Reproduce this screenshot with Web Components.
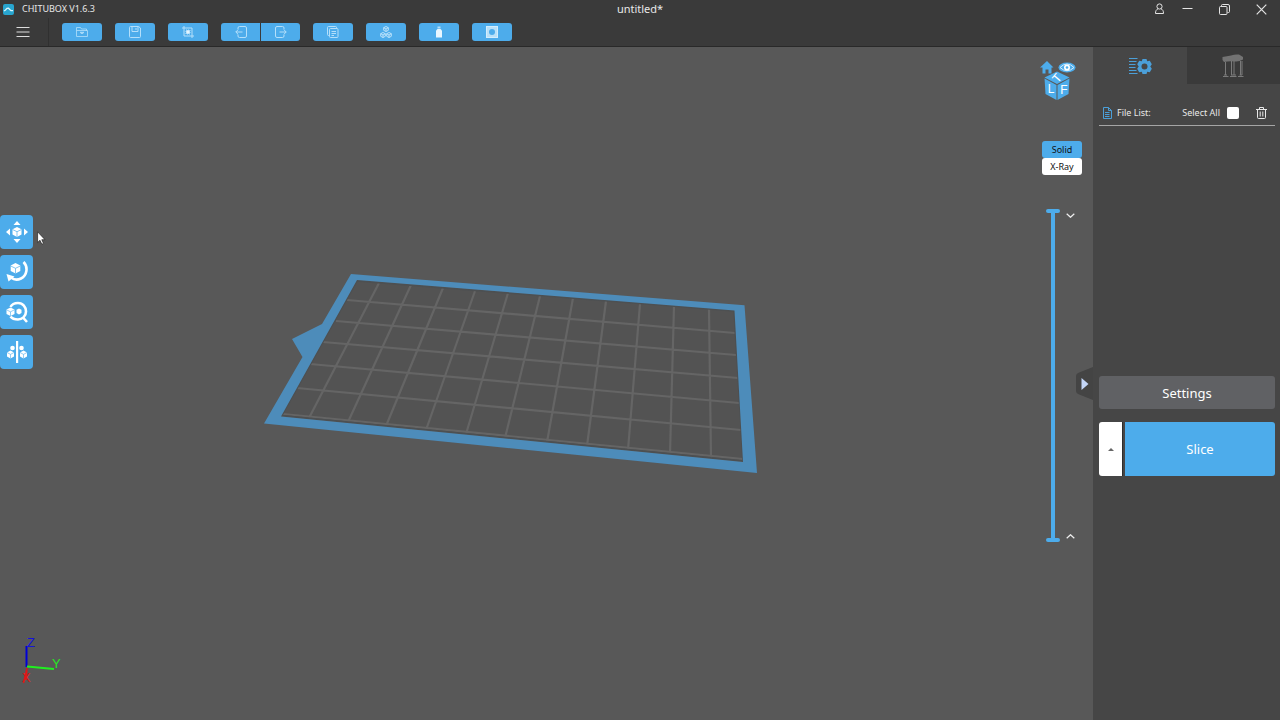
<!DOCTYPE html>
<html lang="en">
<head>
<meta charset="utf-8">
<title>CHITUBOX V1.6.3</title>
<style>
  html, body { height: 100%; margin: 0; }
  body {
    --bar: #3a3a3a; --panel: #464646; --stage: #585858; --blue: #4daceb; --plate: #4d8cba;
    background: var(--stage); color: #e8e8e8; font: 9px/12px "Noto Sans", "Open Sans", sans-serif;
  }
</style>
</head>
<body>
<chitu-app></chitu-app>

<template id="t-app">
  <style>
    :host { display: flex; flex-direction: column; min-height: 100vh; }
    main { flex: 1; display: flex; }
    print-stage { flex: 1; }
  </style>
  <title-bar app="CHITUBOX V1.6.3" file="untitled*"></title-bar>
  <tool-bar></tool-bar>
  <main><print-stage></print-stage><side-panel></side-panel></main>
</template>

<template id="t-title">
  <style>
    :host { display: grid; grid-template-columns: 1fr auto 1fr; align-items: center; height: 18px; background: var(--bar); }
    .app { display: flex; align-items: center; gap: 8px; padding-left: 3px; }
    .file { font-size: 11px; line-height: 18px; }
    .win { display: flex; justify-content: flex-end; }
    button { width: 37px; height: 18px; padding: 0; border: 0; background: none; color: inherit; display: grid; place-items: center; }
    button.user { width: 19px; }
    svg { display: block; fill: none; stroke: #e4e4e4; }
  </style>
  <div class="app">
    <svg width="11" height="11" viewBox="0 0 11 11" stroke="none"><rect width="11" height="11" rx="2" fill="#28a5cf" stroke="none"/><path d="M1 7 2.500 6 4 4.300 5.500 4.200 7 5.800 8 6.600 10 6.600" stroke="#d9f6ff" stroke-width="1.300"/></svg>
    <span id="app"></span>
  </div>
  <div class="file" id="file"></div>
  <div class="win">
    <button class="user" aria-label="Account"><svg width="11" height="12" viewBox="0 0 11 12"><circle cx="5.500" cy="3.500" r="2.600"/><path d="M4 5.800C2.200 6.600 1.500 8 1.500 10.500H9.500C9.500 8 8.800 6.600 7 5.800"/></svg></button>
    <button aria-label="Minimize"><svg width="11" height="11" viewBox="0 0 11 11"><path d="M.5 4.500H10.500"/></svg></button>
    <button aria-label="Restore"><svg width="11" height="11" viewBox="0 0 11 11"><rect x=".5" y="2.500" width="7.500" height="8" rx="1"/><path d="M2.500 2V1.500Q2.500.5 3.500.5H9Q10.500.5 10.500 2V7.500Q10.500 8.500 9.500 8.500H8.500"/></svg></button>
    <button aria-label="Close"><svg width="11" height="11" viewBox="0 0 11 11"><path d="M.7.7 10.300 10.300M10.300.7.7 10.300" stroke-width="1.200"/></svg></button>
  </div>
</template>

<template id="t-bar">
  <style>
    :host { display: flex; align-items: center; gap: 13px; height: 28px; background: var(--bar); border-bottom: 1px solid #292929; }
    .menu { box-sizing: border-box; width: 49px; height: 28px; padding: 0 2px 0 0; border: 0; border-right: 1px solid #303030; background: none; display: grid; place-items: center; }
    .pair { display: flex; gap: 1px; }
    svg { display: block; fill: none; stroke: #b4dffa; }
  </style>
  <button class="menu" aria-label="Menu"><svg width="14" height="12" viewBox="0 0 14 12" style="stroke:#ddd"><path d="M.5 1.500H13.500M.5 6H13.500M.5 10.500H13.500"/></svg></button>
  <tool-button label="Open"><svg width="12" height="12" viewBox="0 0 12 12"><path d="M.5 10.500V1.500H4.500L5.500 3H10.500V5M.5 10.500H11.500V4.500H.5M4 6.500H8M5 5.500V7.500H7V5.500" stroke-width=".8"/></svg></tool-button>
  <tool-button label="Save"><svg width="12" height="12" viewBox="0 0 12 12"><path d="M1.500.5H9.500L11.500 2V10.500Q11.500 11.500 10.500 11.500H1.500Q.5 11.500.5 10.500V1.500Q.5.5 1.500.5ZM3 .5V5.500H9V.5M7 2V4"/></svg></tool-button>
  <tool-button label="Crop"><svg width="12" height="12" viewBox="0 0 12 12"><path d="M2 0V10H12M0 2H10V12"/><path d="M4 4H8V8H4Z" fill="#9bd2f5" stroke-dasharray="1 1"/><circle cx="6" cy="6" r="1.700" fill="#e4f5ff" stroke="none"/></svg></tool-button>
  <div class="pair">
    <tool-button label="Undo" side="start"><svg width="12" height="12" viewBox="0 0 12 12"><path d="M3 3.500V2Q3 .5 4.500.5H10Q11.500.5 11.500 2V10Q11.500 11.500 10 11.500H4.500Q3 11.500 3 10V8.500M7.500 6H.8M3 3.800.8 6 3 8.200"/></svg></tool-button>
    <tool-button label="Redo" side="end"><svg width="12" height="12" viewBox="0 0 12 12"><path d="M9 3.500V2Q9 .5 7.500.5H2Q.5.5.5 2V10Q.5 11.500 2 11.500H7.500Q9 11.500 9 10V8.500M4.500 6H11.200M9 3.800 11.200 6 9 8.200"/></svg></tool-button>
  </div>
  <tool-button label="Copy"><svg width="12" height="12" viewBox="0 0 12 12"><path d="M2.500 9.500H1.500Q.5 9.500.5 8.500V1.500Q.5.5 1.500.5H8.500Q9.500.5 9.500 1.500V2.500"/><rect x="2.500" y="2.500" width="8.500" height="9" rx="1"/><path d="M4.500 5.500H9M4.500 7.500H9M4.500 9.500H7"/></svg></tool-button>
  <tool-button label="Auto layout"><svg width="12" height="12" viewBox="0 0 12 12" style="stroke:#d4effe"><path d="M6 .5 8.300 1.700V4.300L6 5.500 3.700 4.300V1.700ZM3.700 1.700 6 3 8.300 1.700M6 3V5.500M3 6.500 5.300 7.700V10.300L3 11.500.7 10.300V7.700ZM.7 7.700 3 9 5.300 7.700M3 9V11.500M9 6.500 11.300 7.700V10.300L9 11.500 6.700 10.300V7.700ZM6.700 7.700 9 9 11.300 7.700M9 9V11.500" stroke-width=".8"/></svg></tool-button>
  <tool-button label="Resin"><svg width="12" height="12" viewBox="0 0 12 12"><path d="M4.500.5H7.500V2.500H4.500Z" fill="#b5dff8" stroke="none"/><path d="M4.500 3H7.500L9 4.500V11.500H3V4.500Z" fill="#e8f6ff" stroke="none"/></svg></tool-button>
  <tool-button label="Hollow"><svg width="12" height="12" viewBox="0 0 12 12"><rect x=".5" y=".5" width="11" height="11" fill="#b9e0f8" stroke="#d2edfd"/><circle cx="6" cy="6" r="3" fill="#4daceb" stroke="none"/></svg></tool-button>
</template>

<template id="t-toolbtn">
  <style>
    :host { display: block; }
    button { display: grid; place-items: center; width: 40px; height: 18px; padding: 0; border: 0; border-radius: 3px; background: var(--blue); }
    :host([side]) button { width: 39px; }
    :host([side=start]) button { border-radius: 3px 0 0 3px; }
    :host([side=end]) button { border-radius: 0 3px 3px 0; }
    :host([large]) button { width: 33px; height: 34px; border-radius: 4px; }
  </style>
  <button><slot></slot></button>
</template>

<template id="t-stage">
  <style>
    :host { display: grid; position: relative; background: var(--stage); min-width: 0; }
    build-plate, .overlay { grid-area: 1 / 1; }
    .overlay { display: flex; justify-content: space-between; align-items: flex-start; z-index: 1; }
    .tools { display: flex; flex-direction: column; gap: 6px; padding-top: 168px; }
    .tools svg { display: block; fill: #fff; stroke: none; }
    .right { display: flex; flex-direction: column; width: 54px; padding-top: 12px; }
    .toggle { position: absolute; z-index: 2; right: 0; top: 0; bottom: 0; margin: auto 0; width: 17px; height: 33px; padding: 0; border: 0; background: none; }
    .toggle svg, .cursor { display: block; }
    .cursor { position: absolute; z-index: 3; left: 37px; top: 184px; }
  </style>
  <build-plate></build-plate>
  <div class="overlay">
    <div class="tools">
      <tool-button large label="Move"><svg width="22" height="22" viewBox="0 0 22 22"><path d="M11 0 14.500 4H7.500ZM11 22 14.500 18H7.500ZM0 11 4 7.500V14.500ZM22 11 18 7.500V14.500Z"/><path d="M11 6 15.500 8.200V13.500L11 16 6.500 13.500V8.200Z"/><path d="M6.500 8.500 11 10.700 15.500 8.500M11 10.700V16" fill="none" stroke="#4daceb" stroke-width=".7"/></svg></tool-button>
      <tool-button large label="Rotate"><svg width="22" height="22" viewBox="0 0 22 22"><path d="M9.500 2 14.300 4.500V10L9.500 12.500 4.700 10V4.500Z"/><path d="M4.700 5 9.500 7.300 14.300 5M9.500 7.300V12.500" fill="none" stroke="#4daceb" stroke-width=".7"/><path d="M17.500 1C22.500 6 21 14.500 15 17.500 12 19 8 19 5 16.500" fill="none" stroke="#fff" stroke-width="2.600"/><path d="M.5 13 8.500 15.500 2.500 20.500Z"/></svg></tool-button>
      <tool-button large label="Scale"><svg width="22" height="22" viewBox="0 0 22 22"><path d="M4.500 6C6 3 9 2 12 2 17 2 20 6 20 10.500 20 15.500 16 18.500 12 18.500 9 18.500 6 17.500 4.500 15.500M17 16.500 21 21" fill="none" stroke="#fff" stroke-width="2.600"/><path d="M4.500 6.500 8.500 8.500V13L4.500 15 .5 13V8.500ZM13 7.500 15.500 8.800V12L13 13.500 10.500 12V8.800Z"/><path d="M.5 8.800 4.500 10.800 8.500 8.800M4.500 10.800V15" fill="none" stroke="#4daceb" stroke-width=".6"/></svg></tool-button>
      <tool-button large label="Mirror"><svg width="22" height="22" viewBox="0 0 22 22"><path d="M10 0H12.200V22H10Z"/><path d="M4.500 9.500 8 11.500V15.500L4.500 17.500 1 15.500V11.500ZM17.500 9.500 21 11.500V15.500L17.500 17.500 14 15.500V11.500Z"/><circle cx="6.500" cy="7" r="2.300"/><circle cx="15.500" cy="7" r="2.300"/><path d="M1 11.500 4.500 13.400 8 11.500M4.500 13.400V17.500M14 11.500 17.500 13.400 21 11.500M17.500 13.400V17.500" fill="none" stroke="#4daceb" stroke-width=".6"/></svg></tool-button>
    </div>
    <div class="right">
      <view-cube></view-cube>
      <render-mode></render-mode>
      <layer-range></layer-range>
    </div>
  </div>
  <button class="toggle" aria-label="Collapse panel"><svg width="17" height="33" viewBox="0 0 17 33"><path d="M17 0 2 6Q0 7 0 9V24Q0 26 2 27L17 33Z" fill="#444"/><path d="M5.500 11 12.500 17 5.500 23Z" fill="#c4d6f8"/></svg></button>
  <svg class="cursor" width="9" height="14" viewBox="0 0 9 14"><path d="M.6.8V11.500L3 9.300 4.800 13.200 6.500 12.400 4.800 8.700H8Z" fill="#fff" stroke="#222" stroke-width=".7"/></svg>
</template>

<template id="t-plate">
  <style>
    :host { display: block; min-height: 0; }
    svg { display: block; width: 100%; height: 100%; }
    text { font: 13px "Liberation Sans", Arial, sans-serif; }
  </style>
  <svg viewBox="0 47 1093 673" role="img" aria-label="Build plate">
    <path d="M357 280 734 310 743 462 281 416Z" fill="#535353"/>
    <path id="grid" fill="none" stroke="#656565" stroke-width="2.200"/>
    <path d="M357 281 734 311 743 461 282 415.500Z" fill="none" stroke="#4d5052" stroke-width="1.500"/>
    <path fill-rule="evenodd" fill="#4d8cba" d="M351 274 744.500 305.300 757 473 264 423.500 302.500 357 292 339 322 324ZM357 280 281 416.500 743 462 734.500 310.500Z"/>
    <path d="M26.500 667V646" stroke="#0000d8" stroke-width="2"/>
    <path d="M27 666.500 54 669" stroke="#20ef20" stroke-width="2"/>
    <path d="M27 668 23.500 683M27 668 26 680" stroke="#e01717" stroke-width="1.500"/>
    <text x="27" y="647" fill="#1414d8">Z</text>
    <text x="52" y="668" fill="#25e825">Y</text>
    <text x="22" y="682" fill="#e01717">X</text>
  </svg>
</template>

<template id="t-cube">
  <style>
    :host { display: block; height: 42px; }
    svg { display: block; }
    text { font: 12px "Liberation Sans", Arial, sans-serif; fill: #fff; text-anchor: middle; }
  </style>
  <svg width="40" height="42" viewBox="0 0 40 42" role="img" aria-label="View cube">
    <path d="M8 2 14.500 8.500H12.500V14.500H9.500V10.500H6.500V14.500H3.500V8.500H1Z" fill="#4daceb"/>
    <ellipse cx="28" cy="8.500" rx="8.500" ry="5" fill="#4daceb"/>
    <path d="M21 8.500Q28 1.500 35 8.500 28 15 21 8.500Z" fill="none" stroke="#d8effd"/>
    <circle cx="28" cy="8.500" r="3" fill="#fff"/><circle cx="28" cy="8.500" r="1.300" fill="#4daceb"/>
    <path d="M18 12.500 30.500 18.500 18 25 5.500 18.500Z" fill="#4daceb"/>
    <path d="M5.500 19.500 17.500 26V41L6.500 35Z" fill="#4daceb"/><path d="M18.500 26 30.500 19.500 29.500 35 18.500 41Z" fill="#4daceb"/>
    <text x="18" y="23" transform="rotate(-50 18 19)" font-size="11">T</text>
    <text x="12" y="34">L</text><text x="25" y="35">F</text>
  </svg>
</template>

<template id="t-mode">
  <style>
    :host { display: flex; flex-direction: column; width: 40px; margin: 40px 0 0 3px; }
    button { height: 17px; padding: 0; border: 0; border-radius: 3px; background: #fff; color: #111; font: inherit; }
    button[aria-pressed=true] { background: var(--blue); }
  </style>
  <button aria-pressed="true">Solid</button>
  <button aria-pressed="false">X-Ray</button>
</template>

<template id="t-range">
  <style>
    :host { display: flex; gap: 6px; height: 333px; margin: 34px 0 0 7px; }
    .bar { display: grid; width: 14px; background: linear-gradient(var(--blue), var(--blue)) center / 4px 100% no-repeat; }
    input { grid-area: 1 / 1; writing-mode: vertical-lr; direction: rtl; appearance: none; width: 14px; height: 333px; margin: 0; background: none; pointer-events: none; }
    input::-webkit-slider-runnable-track { width: 14px; background: none; }
    input::-webkit-slider-thumb { appearance: none; width: 14px; height: 4px; border-radius: 2px; background: var(--blue); pointer-events: auto; }
    .steps { display: flex; flex-direction: column; justify-content: space-between; }
    button { width: 9px; height: 12px; padding: 0; border: 0; background: none; display: grid; place-items: center; }
    svg { display: block; fill: none; stroke: #eee; stroke-width: 1.200; }
  </style>
  <div class="bar">
    <input type="range" aria-label="Top layer" value="100">
    <input type="range" aria-label="Bottom layer" value="0">
  </div>
  <div class="steps">
    <button aria-label="Layer down"><svg width="9" height="5" viewBox="0 0 9 5"><path d="M.7.7 4.500 4.300 8.300.7"/></svg></button>
    <button aria-label="Layer up"><svg width="9" height="5" viewBox="0 0 9 5"><path d="M.7 4.300 4.500.7 8.300 4.300"/></svg></button>
  </div>
</template>

<template id="t-panel">
  <style>
    :host { display: block; width: 187px; background: var(--panel); }
    .tabs { display: grid; grid-template-columns: 1fr 1fr; height: 37px; }
    .tabs button { padding: 0; border: 0; background: #3a3a3a; display: grid; place-items: center; }
    .tabs button[aria-selected=true] { background: none; }
    .body { padding: 17px 5px 0 6px; }
    .head { display: flex; align-items: center; height: 24px; padding: 0 8px 0 4px; border-bottom: 1px solid #a5a5a5; }
    .head .name { flex: 1; margin-left: 5px; }
    label { display: flex; align-items: center; gap: 7px; }
    input { appearance: none; width: 12px; height: 12px; margin: 0; border-radius: 2px; background: #fff; }
    input:checked { background: var(--blue); }
    .trash { width: 11px; height: 12px; margin-left: 17px; padding: 0; border: 0; background: none; }
    svg { display: block; }
    .files { height: 250px; margin: 0; padding: 0; }
    .settings, .slice { border: 0; color: #fff; font: 13px/20px "Noto Sans", "Open Sans", sans-serif; padding: 0; }
    .settings { width: 100%; height: 33px; border-radius: 3px; background: #606164; display: block; }
    .go { display: flex; gap: 3px; height: 54px; margin-top: 13px; }
    .more { width: 23px; padding: 0; border: 0; border-radius: 3px 0 0 3px; background: #fff; display: grid; place-items: center; box-shadow: 1px 0 #2d2d2d; }
    .slice { flex: 1; border-radius: 0 3px 3px 0; background: var(--blue); }
  </style>
  <div class="tabs" role="tablist">
    <button role="tab" aria-selected="true" aria-label="Slice settings"><svg width="24" height="18" viewBox="0 0 24 18"><path d="M1 1.500H9.500M1 4.500H8.500M1 7.500H7.500M1 10.500H7.500M1 13.500H8.500M1 16.500H9.500" stroke="#4b9fd8" stroke-width="1.200"/><path d="M14.500 1H18.500L19.200 3.300 21.800 2.800 23.800 6.200 22.300 8.500 23.800 10.800 21.800 14.200 19.200 13.700 18.500 16H14.500L13.800 13.700 11.200 14.200 9.200 10.800 10.700 8.500 9.200 6.200 11.200 2.800 13.800 3.300Z" fill="#4b9fd8" transform="translate(0 1)"/><circle cx="16.500" cy="9.500" r="3" fill="#464646"/></svg></button>
    <button role="tab" aria-selected="false" aria-label="Supports"><svg width="24" height="25" viewBox="0 0 24 25"><path d="M1.500 4Q6 3 10 2.500 14 1 18 1.500L22 4V6.500Q18 9 14 8.500 8 8 3 9L1.500 7Z" fill="#737373"/><path d="M4.500 9V22M10.500 8V22M13 8V22M19.500 8V22M21 8V22M2 23.500H7.500M9 23.500H15.500M17 23.500H22.500M3 22H6M10 22H15M18.500 22H21" stroke="#7b7b7b"/></svg></button>
  </div>
  <div class="body">
    <div class="head">
      <svg width="9" height="12" viewBox="0 0 9 12" fill="none" stroke="#4b9fd8"><path d="M.5.5H5.500L8.500 3.500V11.500H.5ZM5.500.5V3.500H8.500M2 5.500H6.500M2 7.500H6.500M2 9.500H6.500"/></svg>
      <span class="name">File List:</span>
      <label for="all">Select All <input type="checkbox" id="all"></label>
      <button class="trash" aria-label="Delete"><svg width="11" height="12" viewBox="0 0 11 12" fill="none" stroke="#e8e8e8"><path d="M0 2.500H11M3.500 2.500V.5H7.500V2.500M1.500 2.500V10.500Q1.500 11.500 2.500 11.500H8.500Q9.500 11.500 9.500 10.500V2.500M4.200 4.500V9.500M6.800 4.500V9.500"/></svg></button>
    </div>
    <ul class="files"></ul>
    <button class="settings">Settings</button>
    <div class="go">
      <button class="more" aria-label="More slice options"><svg width="6" height="3" viewBox="0 0 6 3"><path d="M3 0 6 3H0Z" fill="#666"/></svg></button>
      <button class="slice">Slice</button>
    </div>
  </div>
</template>

<script>
  // Registers an element whose shadow root is cloned from a template.
  function define(name, templateId, ready) {
    customElements.define(name, class extends HTMLElement {
      constructor() {
        super();
        this.attachShadow({ mode: "open" })
          .append(document.getElementById(templateId).content.cloneNode(true));
      }
      connectedCallback() { if (ready) ready(this, this.shadowRoot); }
    });
  }

  define("tool-button", "t-toolbtn", (host, root) => {
    root.querySelector("button").setAttribute("aria-label", host.getAttribute("label"));
  });
  define("title-bar", "t-title", (host, root) => {
    root.getElementById("app").textContent = host.getAttribute("app");
    root.getElementById("file").textContent = host.getAttribute("file");
  });
  define("tool-bar", "t-bar");
  define("build-plate", "t-plate", (host, root) => {
    // Each entry is a grid line in perspective: x1, y1, x2, y2.
    const lines = [
      [379, 283, 309, 418], [411, 285, 348, 422], [443, 288, 386, 426], [475, 291, 426, 430],
      [508, 293, 466, 434], [540, 296, 505, 438], [573, 298, 547, 442], [606, 301, 587, 446],
      [640, 304, 628, 450], [674, 306, 670, 454], [709, 309, 711, 458],
      [347, 300, 735, 333], [336, 321, 736, 355], [323, 342, 738, 378],
      [310, 364, 739, 403], [297, 388, 741, 430], [283, 414, 743, 459]
    ];
    root.getElementById("grid").setAttribute("d",
      lines.map(([a, b, c, d]) => `M${a} ${b}L${c} ${d}`).join(""));
  });
  define("view-cube", "t-cube");
  define("render-mode", "t-mode", (host, root) => {
    const buttons = [...root.querySelectorAll("button")];
    buttons.forEach(b => b.onclick = () =>
      buttons.forEach(o => o.setAttribute("aria-pressed", o === b)));
  });
  define("layer-range", "t-range");
  define("print-stage", "t-stage");
  define("side-panel", "t-panel");
  define("chitu-app", "t-app");
</script>
</body>
</html>
